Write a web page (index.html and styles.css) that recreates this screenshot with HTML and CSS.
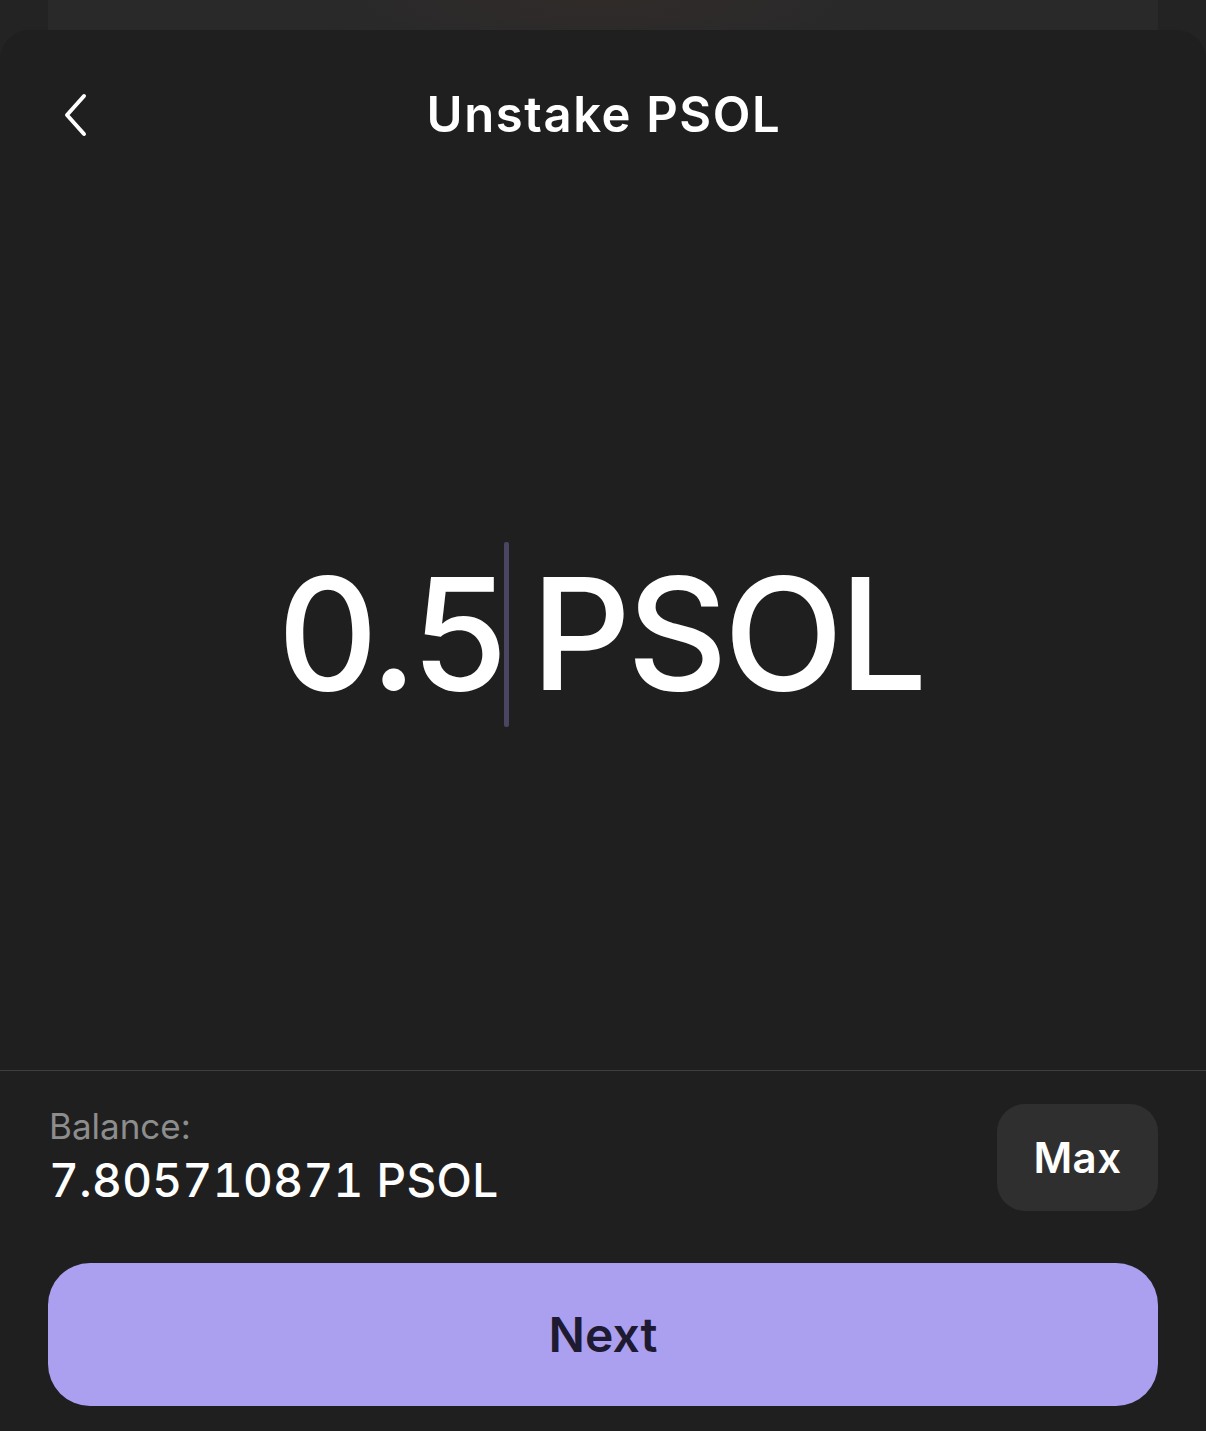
FILE: index.html
```html
<!DOCTYPE html>
<html lang="en">
<head>
<meta charset="utf-8">
<title>Unstake PSOL</title>
<link rel="stylesheet" href="styles.css">
</head>
<body>
<div class="page">
  <div class="behind"></div>
  <div class="sheet">
    <header class="header">
      <button class="back" aria-label="Back">
        <svg width="28" height="44" viewBox="0 0 28 44" fill="none"><path d="M22 3 L5 22 L22 41" stroke="#ffffff" stroke-width="4" stroke-linecap="round" stroke-linejoin="round"/></svg>
      </button>
      <h1 class="title">Unstake PSOL</h1>
    </header>
    <main class="amount-area">
      <div class="amount">
        <span class="num">0.5</span><span class="caret"></span><span class="unit">PSOL</span>
      </div>
    </main>
    <div class="divider"></div>
    <section class="balance-row">
      <div class="balance">
        <div class="balance-label">Balance:</div>
        <div class="balance-value">7.805710871 PSOL</div>
      </div>
      <button class="max">Max</button>
    </section>
    <div class="footer">
      <button class="next">Next</button>
    </div>
  </div>
</div>
</body>
</html>
```
FILE: styles.css
```css
* { box-sizing: border-box; }
html, body { margin: 0; padding: 0; }
body {
  background: #232323;
  font-family: Inter, "Noto Sans", "Liberation Sans", sans-serif;
  color: #ffffff;
}
.page {
  width: 1206px;
  height: 1431px;
  overflow: hidden;
  display: flex;
  flex-direction: column;
  background: #232323;
}
.behind {
  height: 30px;
  margin: 0 48px;
  flex: none;
  background: radial-gradient(ellipse 300px 60px at 50% 0%, #302b29 0%, #29292a 100%);
}
.sheet {
  flex: 1;
  display: flex;
  flex-direction: column;
  background: #1f1f1f;
  border-radius: 30px 30px 0 0;
}
.header {
  height: 168px;
  display: flex;
  align-items: center;
  justify-content: center;
  position: relative;
  flex: none;
}
.back {
  position: absolute;
  left: 62px;
  top: 63px;
  background: none;
  border: 0;
  padding: 0;
  width: 28px;
  height: 44px;
  display: flex;
}
.title {
  margin: 0;
  font-size: 49px;
  font-weight: 600;
  letter-spacing: 1.6px;
  line-height: 1;
  padding-left: 2px;
}
.amount-area {
  flex: 1;
  display: flex;
  align-items: center;
  justify-content: center;
}
.amount {
  display: flex;
  align-items: center;
  font-size: 156px;
  font-weight: 500;
  line-height: 1;
  letter-spacing: -4px;
  margin-left: -5px;
}
.caret {
  width: 5px;
  height: 185px;
  border-radius: 2px;
  background: #4a4661;
  margin: 0 22px 0 0;
}
.divider {
  height: 1px;
  background: #3e3e3e;
  flex: none;
}
.balance-row {
  display: flex;
  justify-content: space-between;
  align-items: center;
  padding: 33px 48px 52px 49px;
  flex: none;
}
.balance-label {
  font-size: 35px;
  color: #8d8d8d;
  line-height: 44px;
  margin-top: -3px;
}
.balance-value {
  font-size: 46px;
  font-weight: 500;
  line-height: 56px;
  letter-spacing: 0.4px;
  font-variant-numeric: tabular-nums;
  margin-top: 4px;
}
.max {
  width: 161px;
  height: 107px;
  border: 0;
  border-radius: 28px;
  background: #2f2f2f;
  color: #ffffff;
  font-family: inherit;
  font-size: 42px;
  font-weight: 600;
  letter-spacing: 0.5px;
}
.footer {
  padding: 0 48px 25px;
  flex: none;
}
.next {
  width: 100%;
  height: 143px;
  border: 0;
  border-radius: 42px;
  background: #ab9ff0;
  color: #1d1a31;
  font-family: inherit;
  font-size: 48px;
  font-weight: 600;
}
```
